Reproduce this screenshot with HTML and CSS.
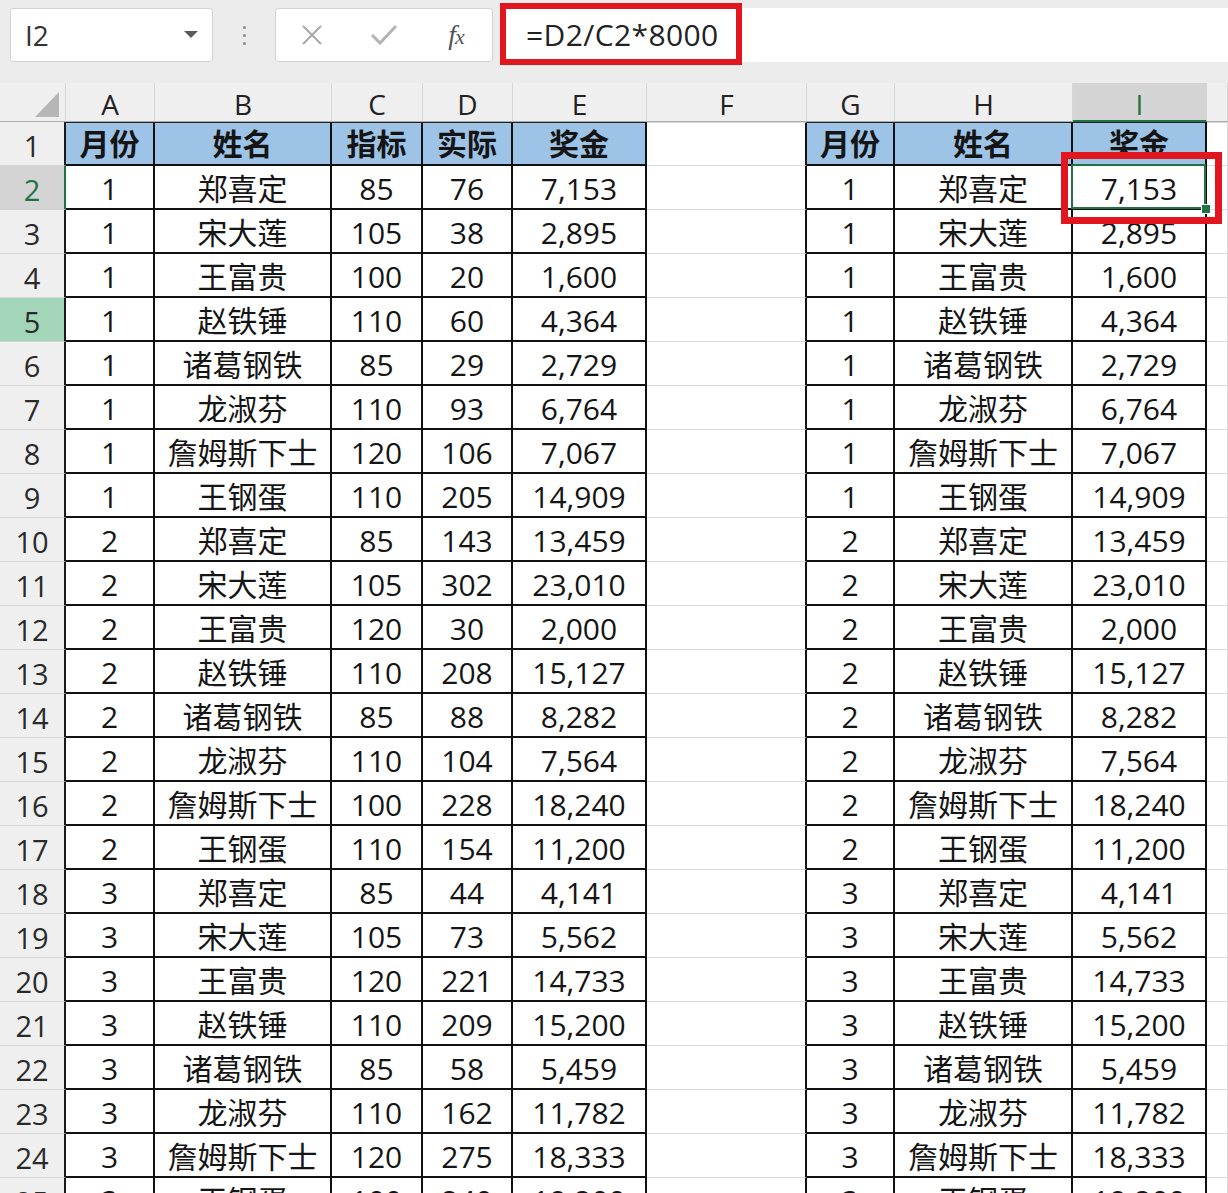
FILE: index.html
```html
<!DOCTYPE html>
<html lang="zh">
<head>
<meta charset="utf-8">
<title>Sheet</title>
<link rel="stylesheet" href="styles.css">
</head>
<body>
<div class="toolbar">
  <div class="namebox"><span class="ref">I2</span><svg class="dd" width="14" height="8" viewBox="0 0 14 8"><polygon points="0,0 14,0 7,7" fill="#5a5a5a"/></svg></div>
  <div class="dots"><i></i><i></i><i></i></div>
  <div class="btns">
    <svg width="24" height="24" viewBox="0 0 24 24"><path d="M3 3 L21 21 M21 3 L3 21" stroke="#a8a8a8" stroke-width="2" fill="none"/></svg>
    <svg width="28" height="24" viewBox="0 0 28 24"><path d="M2 12 L10 20 L26 3" stroke="#b4b4b4" stroke-width="3" fill="none"/></svg>
    <span class="fx"><i>f</i><i class="x">x</i></span>
  </div>
  <div class="fbar">=D2/C2*8000</div>
</div>

<div class="sheet">
  <div class="ch corner"><svg width="24" height="25" viewBox="0 0 24 25"><polygon points="24,0 24,25 0,25" fill="#b6b6b6"/></svg></div>
  <div class="ch">A</div><div class="ch">B</div><div class="ch">C</div><div class="ch">D</div><div class="ch">E</div><div class="ch">F</div><div class="ch">G</div><div class="ch">H</div><div class="ch csel">I</div><div class="ch"></div>

  <div class="rh">1</div><div class="d h">月份</div><div class="d h">姓名</div><div class="d h">指标</div><div class="d h">实际</div><div class="d h">奖金</div><div class="e f ft"></div><div class="d h">月份</div><div class="d h">姓名</div><div class="d h">奖金</div><div class="e ft"></div>

  <div class="rh rsel">2</div><div class="d">1</div><div class="d">郑喜定</div><div class="d">85</div><div class="d">76</div><div class="d">7,153</div><div class="e f"></div><div class="d">1</div><div class="d">郑喜定</div><div class="d sel">7,153</div><div class="e"></div>
  <div class="rh">3</div><div class="d">1</div><div class="d">宋大莲</div><div class="d">105</div><div class="d">38</div><div class="d">2,895</div><div class="e f"></div><div class="d">1</div><div class="d">宋大莲</div><div class="d">2,895</div><div class="e"></div>
  <div class="rh">4</div><div class="d">1</div><div class="d">王富贵</div><div class="d">100</div><div class="d">20</div><div class="d">1,600</div><div class="e f"></div><div class="d">1</div><div class="d">王富贵</div><div class="d">1,600</div><div class="e"></div>
  <div class="rh rhov">5</div><div class="d">1</div><div class="d">赵铁锤</div><div class="d">110</div><div class="d">60</div><div class="d">4,364</div><div class="e f"></div><div class="d">1</div><div class="d">赵铁锤</div><div class="d">4,364</div><div class="e"></div>
  <div class="rh">6</div><div class="d">1</div><div class="d">诸葛钢铁</div><div class="d">85</div><div class="d">29</div><div class="d">2,729</div><div class="e f"></div><div class="d">1</div><div class="d">诸葛钢铁</div><div class="d">2,729</div><div class="e"></div>
  <div class="rh">7</div><div class="d">1</div><div class="d">龙淑芬</div><div class="d">110</div><div class="d">93</div><div class="d">6,764</div><div class="e f"></div><div class="d">1</div><div class="d">龙淑芬</div><div class="d">6,764</div><div class="e"></div>
  <div class="rh">8</div><div class="d">1</div><div class="d">詹姆斯下士</div><div class="d">120</div><div class="d">106</div><div class="d">7,067</div><div class="e f"></div><div class="d">1</div><div class="d">詹姆斯下士</div><div class="d">7,067</div><div class="e"></div>
  <div class="rh">9</div><div class="d">1</div><div class="d">王钢蛋</div><div class="d">110</div><div class="d">205</div><div class="d">14,909</div><div class="e f"></div><div class="d">1</div><div class="d">王钢蛋</div><div class="d">14,909</div><div class="e"></div>
  <div class="rh">10</div><div class="d">2</div><div class="d">郑喜定</div><div class="d">85</div><div class="d">143</div><div class="d">13,459</div><div class="e f"></div><div class="d">2</div><div class="d">郑喜定</div><div class="d">13,459</div><div class="e"></div>
  <div class="rh">11</div><div class="d">2</div><div class="d">宋大莲</div><div class="d">105</div><div class="d">302</div><div class="d">23,010</div><div class="e f"></div><div class="d">2</div><div class="d">宋大莲</div><div class="d">23,010</div><div class="e"></div>
  <div class="rh">12</div><div class="d">2</div><div class="d">王富贵</div><div class="d">120</div><div class="d">30</div><div class="d">2,000</div><div class="e f"></div><div class="d">2</div><div class="d">王富贵</div><div class="d">2,000</div><div class="e"></div>
  <div class="rh">13</div><div class="d">2</div><div class="d">赵铁锤</div><div class="d">110</div><div class="d">208</div><div class="d">15,127</div><div class="e f"></div><div class="d">2</div><div class="d">赵铁锤</div><div class="d">15,127</div><div class="e"></div>
  <div class="rh">14</div><div class="d">2</div><div class="d">诸葛钢铁</div><div class="d">85</div><div class="d">88</div><div class="d">8,282</div><div class="e f"></div><div class="d">2</div><div class="d">诸葛钢铁</div><div class="d">8,282</div><div class="e"></div>
  <div class="rh">15</div><div class="d">2</div><div class="d">龙淑芬</div><div class="d">110</div><div class="d">104</div><div class="d">7,564</div><div class="e f"></div><div class="d">2</div><div class="d">龙淑芬</div><div class="d">7,564</div><div class="e"></div>
  <div class="rh">16</div><div class="d">2</div><div class="d">詹姆斯下士</div><div class="d">100</div><div class="d">228</div><div class="d">18,240</div><div class="e f"></div><div class="d">2</div><div class="d">詹姆斯下士</div><div class="d">18,240</div><div class="e"></div>
  <div class="rh">17</div><div class="d">2</div><div class="d">王钢蛋</div><div class="d">110</div><div class="d">154</div><div class="d">11,200</div><div class="e f"></div><div class="d">2</div><div class="d">王钢蛋</div><div class="d">11,200</div><div class="e"></div>
  <div class="rh">18</div><div class="d">3</div><div class="d">郑喜定</div><div class="d">85</div><div class="d">44</div><div class="d">4,141</div><div class="e f"></div><div class="d">3</div><div class="d">郑喜定</div><div class="d">4,141</div><div class="e"></div>
  <div class="rh">19</div><div class="d">3</div><div class="d">宋大莲</div><div class="d">105</div><div class="d">73</div><div class="d">5,562</div><div class="e f"></div><div class="d">3</div><div class="d">宋大莲</div><div class="d">5,562</div><div class="e"></div>
  <div class="rh">20</div><div class="d">3</div><div class="d">王富贵</div><div class="d">120</div><div class="d">221</div><div class="d">14,733</div><div class="e f"></div><div class="d">3</div><div class="d">王富贵</div><div class="d">14,733</div><div class="e"></div>
  <div class="rh">21</div><div class="d">3</div><div class="d">赵铁锤</div><div class="d">110</div><div class="d">209</div><div class="d">15,200</div><div class="e f"></div><div class="d">3</div><div class="d">赵铁锤</div><div class="d">15,200</div><div class="e"></div>
  <div class="rh">22</div><div class="d">3</div><div class="d">诸葛钢铁</div><div class="d">85</div><div class="d">58</div><div class="d">5,459</div><div class="e f"></div><div class="d">3</div><div class="d">诸葛钢铁</div><div class="d">5,459</div><div class="e"></div>
  <div class="rh">23</div><div class="d">3</div><div class="d">龙淑芬</div><div class="d">110</div><div class="d">162</div><div class="d">11,782</div><div class="e f"></div><div class="d">3</div><div class="d">龙淑芬</div><div class="d">11,782</div><div class="e"></div>
  <div class="rh">24</div><div class="d">3</div><div class="d">詹姆斯下士</div><div class="d">120</div><div class="d">275</div><div class="d">18,333</div><div class="e f"></div><div class="d">3</div><div class="d">詹姆斯下士</div><div class="d">18,333</div><div class="e"></div>
  <div class="rh">25</div><div class="d">3</div><div class="d">王钢蛋</div><div class="d">100</div><div class="d">240</div><div class="d">19,200</div><div class="e f"></div><div class="d">3</div><div class="d">王钢蛋</div><div class="d">19,200</div><div class="e"></div>
</div>

<div class="mark mark-formula"></div>
<div class="mark mark-cell"></div>
</body>
</html>
```

FILE: styles.css
```css
html, body {
  margin: 0;
  padding: 0;
}
body {
  width: 1228px;
  height: 1193px;
  overflow: hidden;
  position: relative;
  background: #ffffff;
  font-family: "Open Sans", "Noto Sans CJK SC", sans-serif;
  color: #151515;
}

/* ---------- toolbar ---------- */
.toolbar {
  height: 83px;
  box-sizing: border-box;
  padding: 8px 0 0 10px;
  display: flex;
  align-items: flex-start;
  background: #ececec;
}
.namebox {
  width: 203px;
  height: 54px;
  box-sizing: border-box;
  background: #ffffff;
  border: 1px solid #d3d3d3;
  border-radius: 3px;
  display: flex;
  align-items: center;
  justify-content: space-between;
  padding: 0 14px 0 14px;
}
.ref {
  font-size: 28px;
  line-height: 1;
  color: #333333;
}
.dots {
  width: 62px;
  height: 54px;
  display: flex;
  flex-direction: column;
  align-items: center;
  justify-content: center;
  gap: 5px;
}
.dots i {
  width: 3px;
  height: 3px;
  border-radius: 50%;
  background: #8a8a8a;
}
.btns {
  width: 218px;
  height: 54px;
  box-sizing: border-box;
  background: #ffffff;
  border: 1px solid #d3d3d3;
  border-radius: 3px;
  display: grid;
  grid-template-columns: repeat(3, 1fr);
  align-items: center;
  justify-items: center;
}
.fx {
  font-family: "Liberation Serif", "DejaVu Serif", serif;
  font-style: italic;
  font-size: 28px;
  line-height: 1;
  color: #555555;
  letter-spacing: -1px;
}
.fx i {
  font-style: italic;
}
.fx .x {
  font-size: 22px;
}
.fbar {
  margin-left: 9px;
  flex: 1;
  height: 54px;
  box-sizing: border-box;
  background: #ffffff;
  padding-left: 24px;
  font-size: 30px;
  line-height: 54px;
  color: #222222;
  letter-spacing: 0.4px;
}

/* ---------- sheet grid ---------- */
.sheet {
  display: grid;
  grid-template-columns: 66px 89px 177px 91px 90px 134px 160px 88px 178px 134px 21px;
  grid-template-rows: 39px repeat(25, 44px);
}
.sheet > div {
  box-sizing: border-box;
  display: flex;
  align-items: center;
  justify-content: center;
  font-size: 30px;
  line-height: 1;
  white-space: nowrap;
  overflow: visible;
  padding-top: 3px;
}
.ch {
  background: #efefef;
  border-right: 1px solid #d6d6d6;
  border-bottom: 1px solid #ababab;
  font-size: 28px !important;
  color: #222222;
  padding-top: 4px !important;
}
.corner {
  justify-content: flex-end !important;
  align-items: flex-end !important;
  padding: 0 6px 4px 0 !important;
}
.csel {
  background: #d4d4d4 !important;
  color: #217346;
  border-bottom: 2px solid #217346 !important;
}
.rh {
  background: #efefef;
  border-bottom: 1px solid #d6d6d6;
  border-right: 2px solid #1a1a1a;
  color: #2a2a2a;
  font-size: 29px !important;
}
.rsel {
  background: #d4d4d4;
  color: #217346;
  border-right-color: #217346;
}
.rhov {
  background: #a3d6b9;
}
.d {
  background: #ffffff;
  border-right: 2px solid #111111;
  border-bottom: 2px solid #111111;
}
.h {
  background: #9dc3e6;
  font-weight: 700;
  border-top: 1px solid #222222;
  padding-top: 1px !important;
}
.e {
  background: #ffffff;
  border-right: 1px solid #d9d9d9;
  border-bottom: 1px solid #d9d9d9;
}
.f {
  border-right: 2px solid #111111;
}
.ft {
  border-top: 1px solid #d9d9d9;
}

/* selected cell */
.sel {
  position: relative;
}
.sel::before {
  content: "";
  position: absolute;
  left: -2px;
  top: -2px;
  right: -1px;
  bottom: -1px;
  border: 2px solid #217346;
  pointer-events: none;
}
.sel::after {
  content: "";
  position: absolute;
  right: -6px;
  bottom: -6px;
  width: 8px;
  height: 8px;
  background: #217346;
  border: 1px solid #ffffff;
}

/* red annotation boxes */
.mark {
  position: absolute;
  box-sizing: border-box;
  border-style: solid;
  border-color: #e2161e;
}
.mark-formula {
  left: 500px;
  top: 3px;
  width: 242px;
  height: 62px;
  border-width: 6px;
}
.mark-cell {
  left: 1061px;
  top: 152px;
  width: 161px;
  height: 72px;
  border-width: 7px;
}
```
